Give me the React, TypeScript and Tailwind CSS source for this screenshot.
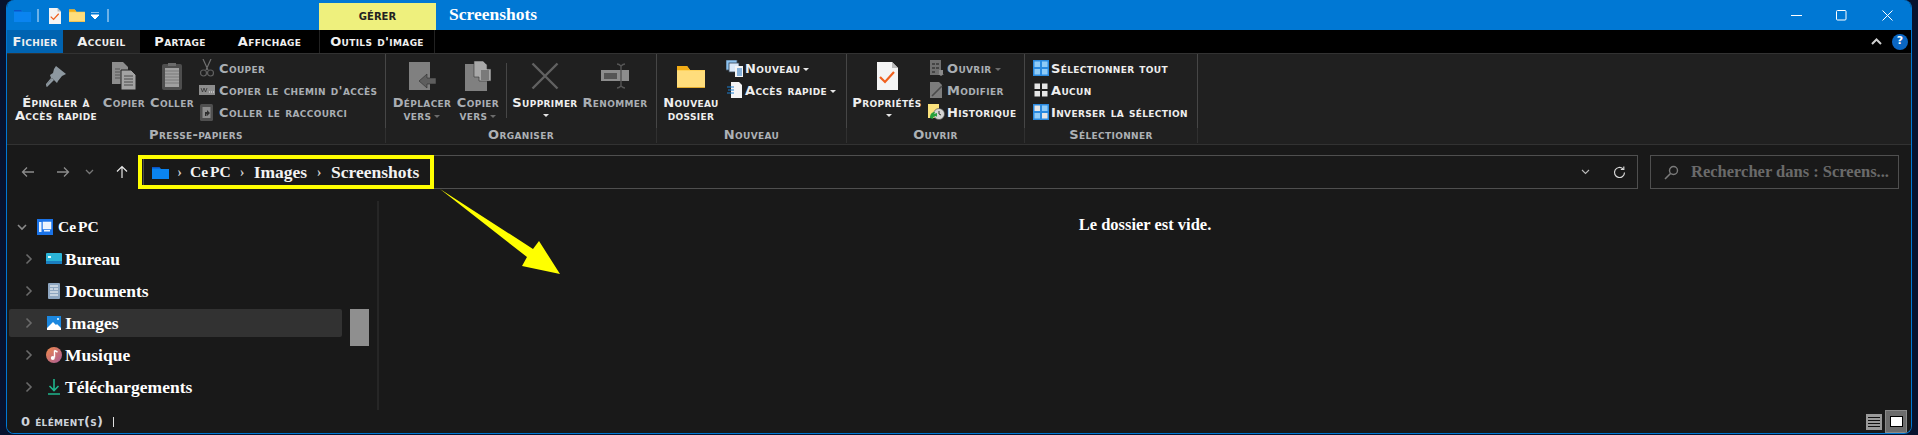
import type { ReactNode } from 'react'

const ribbonFont = "font-['DejaVu_Sans',sans-serif] font-bold [font-variant-caps:small-caps] text-[13px] leading-[13px] tracking-[0.35px] whitespace-nowrap"
const serifBold = "font-['Liberation_Serif',serif] font-bold whitespace-nowrap"

const Icon = ({ w, h, children }: { w: number; h: number; children: ReactNode }) => (
  <svg width={w} height={h} viewBox={`0 0 ${w} ${h}`} className="shrink-0">
    {children}
  </svg>
)

const FolderBlue = () => (
  <Icon w={17} h={13}>
    <path d="M0 1h7l2 2h8v10H0z" fill="#0a84f0" />
    <path d="M0 1h7l1.5 1.5H0z" fill="#0a55c8" />
  </Icon>
)

const FolderYellow = ({ w = 28, h = 23 }: { w?: number; h?: number }) => (
  <svg width={w} height={h} viewBox="0 0 28 23" className="shrink-0">
    <path d="M0 1h10l3 4h15v18H0z" fill="#ffd35c" />
    <path d="M0 1h10l3 4H0z" fill="#f2ac16" />
    <path d="M0 6h28v17H0z" fill="#ffdd7c" />
    <path d="M0 22h28v1H0z" fill="#e2a92c" />
  </svg>
)

const PropsPage = ({ w = 21, h = 28 }: { w?: number; h?: number }) => (
  <svg width={w} height={h} viewBox="0 0 21 28" className="shrink-0">
    <path d="M0 0h15l6 6v22H0z" fill="#f4f4f4" />
    <path d="M15 0l6 6h-6z" fill="#bbb" />
    <path d="M3 15l5 5 9-10" fill="none" stroke="#f0601e" strokeWidth="2.2" />
  </svg>
)

const PinIcon = () => (
  <Icon w={22} h={22}>
    <path d="M11 1l10 8-4 2-4 5-1 2-5-5L2 20l-1 1 0-2 5-6-1-3 3-2 1-4z" fill="#8d98a0" />
    <path d="M1 21l6-8 2 2-7 7z" fill="#8d98a0" />
  </Icon>
)

const CopyIcon = () => (
  <Icon w={24} h={28}>
    <path d="M0 0h11l5 5v17H0z" fill="#8c8c8c" />
    <path d="M9 8h10l5 5v15H9z" fill="#a3a3a3" stroke="#222" strokeWidth="1" />
    <path d="M12 14h9M12 17h9M12 20h9M12 23h9" stroke="#4a4a4a" strokeWidth="1" />
    <path d="M3 7h5M3 10h5M3 13h5M3 16h5" stroke="#555" strokeWidth="1" />
  </Icon>
)

const PasteIcon = () => (
  <Icon w={20} h={30}>
    <rect x="0" y="3" width="20" height="26" rx="2" fill="#4e4e4e" />
    <rect x="3" y="7" width="14" height="19" fill="#a0a0a0" />
    <path d="M3 10h14M3 13h14M3 16h14M3 19h14M3 22h14" stroke="#7b7b7b" strokeWidth="1" />
    <path d="M6 5h8V2H6z" fill="#6a6a6a" />
  </Icon>
)

const ScissorsIcon = () => (
  <Icon w={16} h={18}>
    <path d="M4 0l5 11M12 0L7 11" stroke="#6f6f6f" strokeWidth="1.2" fill="none" />
    <circle cx="4.5" cy="14" r="3" stroke="#5f5f5f" strokeWidth="1.2" fill="none" />
    <circle cx="11.5" cy="14" r="3" stroke="#5f5f5f" strokeWidth="1.2" fill="none" />
  </Icon>
)

const PathIcon = () => (
  <Icon w={16} h={10}>
    <rect width="16" height="10" fill="#8d8d8d" />
    <path d="M2 3l1.5 4L5 3l1.5 4L8 3" stroke="#333" strokeWidth="0.8" fill="none" />
    <path d="M10 7h1M12 7h1M14 7h1" stroke="#eee" strokeWidth="1" />
  </Icon>
)

const ShortcutIcon = () => (
  <Icon w={13} h={17}>
    <rect width="13" height="17" y="0" rx="1.5" fill="#4f4f4f" />
    <rect x="2.5" y="3" width="8" height="11" fill="#8c8c8c" />
    <path d="M5 12V8h2V6l3 3-3 3v-2H6.5v2z" fill="#2e2e2e" />
  </Icon>
)

const MoveIcon = () => (
  <Icon w={27} h={28}>
    <path d="M0 0h21v28H0z" fill="#808080" />
    <path d="M10 19l8-7v4h9v6h-9v4z" fill="#5e5e5e" stroke="#222" strokeWidth="0.5" />
  </Icon>
)

const CopyToIcon = () => (
  <Icon w={26} h={30}>
    <path d="M0 3h22v27H0z" fill="#808080" />
    <path d="M9 0h9l4 4v4h4v12H14v-4H9z" fill="#a8a8a8" stroke="#333" strokeWidth="0.6" />
    <path d="M16 10h8M16 12h8M16 14h8M16 16h8M16 18h8" stroke="#4c4c4c" strokeWidth="1" />
  </Icon>
)

const DeleteIcon = () => (
  <Icon w={28} h={28}>
    <path d="M1.5 1.5l25 25M26.5 1.5l-25 25" stroke="#616161" strokeWidth="2.4" />
  </Icon>
)

const RenameIcon = () => (
  <Icon w={28} h={26}>
    <rect x="0" y="7" width="28" height="11" fill="#8d8d8d" />
    <rect x="3" y="10" width="13" height="6" fill="#555" />
    <path d="M16 1c2 0 3 1 4 2 1-1 2-2 4-2M20 3v20M16 25c2 0 3-1 4-2 1 1 2 2 4 2" stroke="#555" strokeWidth="1.4" fill="none" />
  </Icon>
)

const NewItemIcon = () => (
  <Icon w={17} h={17}>
    <rect x="0" y="0" width="11" height="10" fill="#8cc2ef" stroke="#456" strokeWidth="0.8" />
    <rect x="3" y="3" width="10" height="9" fill="#dceafa" stroke="#345" strokeWidth="0.8" />
    <path d="M9 6h8v11H9z" fill="#f5f5f5" />
    <path d="M11 9h5M11 11h5M11 13h5M11 15h5" stroke="#1a6fc0" strokeWidth="1" />
  </Icon>
)

const QuickAccessIcon = () => (
  <Icon w={16} h={16}>
    <path d="M4 0h8l3 3v13H4z" fill="#f5f5f5" />
    <path d="M0 5h7M1 8h6M0 11h7" stroke="#1a7fd0" strokeWidth="1" />
  </Icon>
)

const OpenIcon = () => (
  <Icon w={14} h={16}>
    <rect width="11" height="15" fill="#6f6f6f" />
    <path d="M2 3h3v2H2zM6 3h3v2H6zM2 7h3v2H2zM6 7h3v2H6zM2 11h3v2H2z" fill="#444" />
    <path d="M9 10h4v4h1l-3 2-3-2h1z" fill="#8a8a8a" />
  </Icon>
)

const EditIcon = () => (
  <Icon w={14} h={16}>
    <path d="M0 0h9l3 3v13H0z" fill="#7c7c7c" />
    <path d="M2 14L12 4" stroke="#4a4a4a" strokeWidth="1.6" />
  </Icon>
)

const HistoryIcon = () => (
  <Icon w={17} h={16}>
    <rect width="11" height="14" fill="#fbe27d" />
    <circle cx="11" cy="10" r="5.5" fill="#d4d4d4" stroke="#444" strokeWidth="0.6" />
    <path d="M11 7v3l2 1" stroke="#333" strokeWidth="1" fill="none" />
    <path d="M2 14c0-4 2-6 5-6l-1 2 3-1v4l-1-1c-2 0-3 1-3 3z" fill="#26a03c" />
  </Icon>
)

const SelectGrid = ({ fills, frame }: { fills: string[]; frame?: boolean }) => (
  <Icon w={16} h={16}>
    {frame && <rect width="16" height="16" fill="#2a8ae0" />}
    <rect x="1.5" y="1.5" width="5.5" height="5.5" fill={fills[0]} />
    <rect x="9" y="1.5" width="5.5" height="5.5" fill={fills[1]} />
    <rect x="1.5" y="9" width="5.5" height="5.5" fill={fills[2]} />
    <rect x="9" y="9" width="5.5" height="5.5" fill={fills[3]} />
  </Icon>
)

const Caret = ({ dim }: { dim?: boolean }) => (
  <span className={`inline-block align-middle ml-[3px] border-x-[3px] border-t-[3px] border-x-transparent ${dim ? 'border-t-[#6b6b6b]' : 'border-t-[#e6e6e6]'}`} />
)

const LargeButton = ({
  icon,
  lines,
  width,
  dim,
  caret,
}: {
  icon: ReactNode
  lines: ReactNode[]
  width: string
  dim?: boolean
  caret?: boolean
}) => (
  <div className={`flex flex-col items-center ${width}`}>
    <div className="h-[38px] flex items-center justify-center">{icon}</div>
    <div className={`${ribbonFont} mt-[1px] text-center ${dim ? 'text-[#a9aeb3]' : 'text-[#eeeeee]'}`}>
      {lines.map((line, i) => (
        <div key={i}>{line}</div>
      ))}
      {caret && (
        <div className="leading-[12px]">
          <Caret />
        </div>
      )}
    </div>
  </div>
)

const SmallButton = ({ icon, label, dim, wide }: { icon: ReactNode; label: ReactNode; dim?: boolean; wide?: boolean }) => (
  <div className="flex items-center h-[22px]">
    <div className={`w-[19px] flex justify-center shrink-0 -ml-[1px] ${wide ? 'mr-[3px]' : 'mr-[1px]'}`}>{icon}</div>
    <span className={`${ribbonFont} ${dim ? 'text-[#a9aeb3]' : 'text-[#eeeeee]'}`}>{label}</span>
  </div>
)

const Group = ({ label, width, children }: { label: string; width: string; children: ReactNode }) => (
  <div className={`${width} shrink-0 flex flex-col`}>
    <div className="h-[74px] flex pt-[3px] border-r border-[#464646]">{children}</div>
    <div className={`${ribbonFont} h-[15px] text-center text-[#adb1b5] border-r border-[#303030]`}>{label}</div>
  </div>
)

const NavItem = ({ icon, label, active }: { icon: ReactNode; label: string; active?: boolean }) => (
  <div className="h-[32px] flex items-center">
    <div className={`flex items-center w-full h-[28px] rounded-[2px] pl-[18px] ${active ? 'bg-[#323232]' : ''}`}>
      <svg width="8" height="12" viewBox="0 0 8 12" className="shrink-0 ml-[-2px]">
        <path d="M1.5 1.5L6 6l-4.5 4.5" fill="none" stroke="#6a6a6a" strokeWidth="1.6" />
      </svg>
      <div className="w-[17px] ml-[12px] flex justify-center shrink-0">{icon}</div>
      <span className={`${serifBold} ml-[3px] text-[17.5px] text-white`}>{label}</span>
    </div>
  </div>
)

const Tab = ({ label, width, className = '' }: { label: string; width: string; className?: string }) => (
  <div className={`${ribbonFont} ${width} h-[23px] flex items-center justify-center text-[#f0f0f0] ${className}`}>{label}</div>
)

export default function App() {
  return (
    <div className="relative w-[1918px] h-[435px] bg-[#07122e] overflow-hidden">
      <div className="mx-[6px] h-[434px] flex flex-col rounded-t-[8px] rounded-b-[8px] overflow-hidden border-x border-b border-[#0078d4] bg-[#191919]">
        {/* title bar */}
        <div className="h-[30px] shrink-0 bg-[#0078d4] flex">
          <div className="w-[312px] flex items-center pl-[7px] pt-[1px] gap-0">
            <FolderBlue />
            <div className="ml-[6px] w-[2px] h-[13px] bg-[#6db2e8]" />
            <div className="ml-[10px]">
              <PropsPage w={12} h={16} />
            </div>
            <div className="ml-[8px]">
              <FolderYellow w={16} h={13} />
            </div>
            <svg width="8" height="8" viewBox="0 0 8 8" className="ml-[6px]">
              <path d="M0 0h8M0 3h8L4 7z" stroke="#fff" fill="#fff" strokeWidth="1" />
            </svg>
            <div className="ml-[8px] w-[2px] h-[13px] bg-[#6db2e8]" />
          </div>
          <div className="w-[117px] mt-[3px] bg-[#eef07d] flex items-center justify-center font-['DejaVu_Sans',sans-serif] font-bold text-[10px] text-[#222222]">
            GÉRER
          </div>
          <div className={`${serifBold} ml-[13px] text-[17.5px] text-white leading-[28px]`}>Screenshots</div>
          <div className="ml-auto flex items-center pt-[0px]">
            <svg width="11" height="11" viewBox="0 0 11 11" className="mr-[34px]">
              <path d="M0 5.5h11" stroke="#fff" strokeWidth="1" />
            </svg>
            <svg width="11" height="11" viewBox="0 0 11 11" className="mr-[35px]">
              <rect x="0.5" y="0.5" width="9.5" height="9.5" rx="1" fill="none" stroke="#fff" strokeWidth="1" />
            </svg>
            <svg width="11" height="11" viewBox="0 0 11 11" className="mr-[18px]">
              <path d="M0.5 0.5l10 10M10.5 0.5l-10 10" stroke="#fff" strokeWidth="1" />
            </svg>
          </div>
        </div>

        {/* tabs */}
        <div className="h-[23px] shrink-0 bg-black flex items-start">
          <Tab label="Fichier" width="w-[56px]" className="bg-[#0063b1]" />
          <Tab label="Accueil" width="w-[77px]" className="bg-[#202020]" />
          <Tab label="Partage" width="w-[80px]" />
          <Tab label="Affichage" width="w-[99px]" />
          <Tab label="Outils d'image" width="w-[116px]" className="border-x border-[#222]" />
          <div className="ml-auto h-[23px] flex items-center">
            <svg width="11" height="7" viewBox="0 0 11 7" className="mr-[10px]">
              <path d="M1 6l4.5-4.5L10 6" fill="none" stroke="#d0d0d0" strokeWidth="2" />
            </svg>
            <div className="w-[16px] h-[16px] mr-[3px] rounded-full bg-[#0a66c2] flex items-center justify-center font-['DejaVu_Sans',sans-serif] font-bold text-[11px] text-white">
              ?
            </div>
          </div>
        </div>

        {/* ribbon */}
        <div className="h-[92px] shrink-0 bg-[#202020] border-t border-b border-[#323232] flex">
          <Group label="Presse-papiers" width="w-[379px]">
            <LargeButton icon={<PinIcon />} lines={['Épingler à', 'Accès rapide']} width="w-[98px]" />
            <LargeButton icon={<CopyIcon />} lines={['Copier']} width="w-[44px] ml-[-3px]" dim />
            <LargeButton icon={<PasteIcon />} lines={['Coller']} width="w-[48px] ml-[2px]" dim />
            <div className="ml-[2px]">
              <SmallButton wide icon={<ScissorsIcon />} label="Couper" dim />
              <SmallButton wide icon={<PathIcon />} label="Copier le chemin d'accès" dim />
              <SmallButton wide icon={<ShortcutIcon />} label="Coller le raccourci" dim />
            </div>
          </Group>
          <Group label="Organiser" width="w-[271px]">
            <LargeButton icon={<MoveIcon />} lines={['Déplacer', <>vers<Caret dim /></>]} width="w-[62px] ml-[5px]" dim />
            <LargeButton icon={<CopyToIcon />} lines={['Copier', <>vers<Caret dim /></>]} width="w-[50px]" dim />
            <div className="ml-[3px] w-px h-[55px] mt-[6px] bg-[#464646]" />
            <LargeButton icon={<DeleteIcon />} lines={['Supprimer']} width="w-[72px] ml-[2px]" caret />
            <LargeButton icon={<RenameIcon />} lines={['Renommer']} width="w-[68px]" dim />
          </Group>
          <Group label="Nouveau" width="w-[190px]">
            <LargeButton icon={<FolderYellow />} lines={['Nouveau', 'dossier']} width="w-[64px] ml-[2px]" />
            <div className="ml-[3px]">
              <SmallButton icon={<NewItemIcon />} label={<>Nouveau<Caret /></>} />
              <SmallButton icon={<QuickAccessIcon />} label={<>Accès rapide<Caret /></>} />
            </div>
          </Group>
          <Group label="Ouvrir" width="w-[178px]">
            <LargeButton icon={<PropsPage />} lines={['Propriétés']} width="w-[76px] ml-[2px]" caret />
            <div className="ml-[3px]">
              <SmallButton icon={<OpenIcon />} label={<>Ouvrir<Caret dim /></>} dim />
              <SmallButton icon={<EditIcon />} label="Modifier" dim />
              <SmallButton icon={<HistoryIcon />} label="Historique" />
            </div>
          </Group>
          <Group label="Sélectionner" width="w-[173px]">
            <div className="ml-[7px]">
              <SmallButton icon={<SelectGrid frame fills={['#8fcbf7', '#8fcbf7', '#8fcbf7', '#8fcbf7']} />} label="Sélectionner tout" />
              <SmallButton icon={<SelectGrid fills={['#e6e6e6', '#e6e6e6', '#e6e6e6', '#e6e6e6']} />} label="Aucun" />
              <SmallButton icon={<SelectGrid frame fills={['#e6e6e6', '#8fcbf7', '#8fcbf7', '#e6e6e6']} />} label="Inverser la sélection" />
            </div>
          </Group>
        </div>

        {/* address bar */}
        <div className="h-[56px] shrink-0 bg-[#191919] flex items-start pt-[10px]">
          <div className="w-[131px] h-[34px] flex items-center">
            <svg width="14" height="12" viewBox="0 0 14 12" className="ml-[14px]">
              <path d="M13 6H1.5M6 1.5L1.5 6 6 10.5" fill="none" stroke="#8c8c8c" strokeWidth="1.3" />
            </svg>
            <svg width="14" height="12" viewBox="0 0 14 12" className="ml-[21px]">
              <path d="M1 6h11.5M8 1.5L12.5 6 8 10.5" fill="none" stroke="#8c8c8c" strokeWidth="1.3" />
            </svg>
            <svg width="9" height="6" viewBox="0 0 9 6" className="ml-[15px]">
              <path d="M1 1l3.5 3.5L8 1" fill="none" stroke="#777" strokeWidth="1.3" />
            </svg>
            <svg width="12" height="14" viewBox="0 0 12 14" className="ml-[22px]">
              <path d="M6 13V1.5M1 6.5l5-5 5 5" fill="none" stroke="#e8e8e8" strokeWidth="1.2" />
            </svg>
          </div>
          <div className="w-[296px] h-[34px] shrink-0 border-[4px] border-[#ffff00] flex items-center bg-[#191919]">
            <div className="h-full border-l border-[#4a4a4a] ml-[1px] flex items-center pl-[8px]">
              <FolderBlue />
              <span className={`${serifBold} text-[17.5px] text-[#f2f2f2] flex items-center`}>
                <span className="w-[21px] text-center text-[14px] text-[#cccccc]">›</span>
                <span className="text-[15.5px] [word-spacing:-2px]">Ce PC</span>
                <span className="w-[23px] text-center text-[14px] text-[#cccccc]">›</span>
                <span>Images</span>
                <span className="w-[24px] text-center text-[14px] text-[#cccccc]">›</span>
                <span>Screenshots</span>
              </span>
            </div>
          </div>
          <div className="w-[1204px] h-[34px] shrink-0 border-y border-r border-[#4f4f4f] flex items-center justify-end">
            <svg width="9" height="6" viewBox="0 0 9 6" className="mr-[23px]">
              <path d="M1 1l3.5 3.5L8 1" fill="none" stroke="#bbbbbb" strokeWidth="1.1" />
            </svg>
            <svg width="13" height="13" viewBox="0 0 13 13" className="mr-[11px]">
              <path d="M11.5 6.5a5 5 0 1 1-1.6-3.7" fill="none" stroke="#d8d8d8" strokeWidth="1.2" />
              <path d="M10.8 0.5v3h-3" fill="none" stroke="#d8d8d8" strokeWidth="1.2" />
            </svg>
          </div>
          <div className="ml-[12px] w-[249px] h-[34px] shrink-0 border border-[#4f4f4f] flex items-center pl-[13px]">
            <svg width="15" height="15" viewBox="0 0 15 15" className="shrink-0">
              <circle cx="9.5" cy="5.5" r="4" fill="none" stroke="#7a7a7a" strokeWidth="1.4" />
              <path d="M6.5 8.5L1 14" stroke="#7a7a7a" strokeWidth="1.6" />
            </svg>
            <span className={`${serifBold} ml-[12px] text-[16.5px] text-[#6a6a6a]`}>Rechercher dans : Screens...</span>
          </div>
        </div>

        {/* body */}
        <div className="flex-1 flex min-h-0">
          <div className="w-[372px] shrink-0 flex relative border-r-2 border-[#262626]">
            <div className="w-[333px] shrink-0 ml-[2px] pt-[10px]">
              <div className="h-[32px] flex items-center pl-[8px]">
                <svg width="10" height="7" viewBox="0 0 10 7" className="shrink-0">
                  <path d="M1 1l4 4 4-4" fill="none" stroke="#8a8a8a" strokeWidth="1.6" />
                </svg>
                <svg width="16" height="16" viewBox="0 0 16 16" className="ml-[10px] shrink-0">
                  <rect width="16" height="16" fill="#1a73e8" />
                  <rect x="6" y="3" width="8" height="7" fill="#eaf3fe" stroke="#fff" strokeWidth="0.5" />
                  <rect x="2" y="3" width="2.5" height="10" fill="#eaf3fe" />
                  <rect x="7" y="11" width="6" height="1.5" fill="#eaf3fe" />
                </svg>
                <span className={`${serifBold} ml-[5px] text-[15.5px] [word-spacing:-2px] text-white`}>Ce PC</span>
              </div>
              <NavItem
                label="Bureau"
                icon={
                  <Icon w={16} h={12}>
                    <rect width="16" height="11" rx="1" fill="#2bb5d8" />
                    <rect y="8" width="16" height="3" fill="#1a7fc0" />
                    <rect x="2" y="3" width="3" height="2" fill="#dff" />
                  </Icon>
                }
              />
              <NavItem
                label="Documents"
                icon={
                  <Icon w={12} h={16}>
                    <rect width="12" height="16" rx="1" fill="#8ea6c0" />
                    <path d="M2 3h8M6 6h4M2 9h8M2 12h8M2 6h3" stroke="#fff" strokeWidth="1" />
                  </Icon>
                }
              />
              <NavItem
                label="Images"
                active
                icon={
                  <Icon w={14} h={14}>
                    <rect width="14" height="14" fill="#1b87df" />
                    <path d="M0 12l6-6 3 3 1-1 4 4v2H0z" fill="#fff" />
                    <circle cx="11" cy="3" r="1" fill="#fff" />
                  </Icon>
                }
              />
              <NavItem
                label="Musique"
                icon={
                  <Icon w={16} h={16}>
                    <defs>
                      <linearGradient id="music" x1="0" y1="0" x2="1" y2="1">
                        <stop offset="0" stopColor="#f08a4a" />
                        <stop offset="1" stopColor="#a85a98" />
                      </linearGradient>
                    </defs>
                    <circle cx="8" cy="8" r="8" fill="url(#music)" />
                    <path d="M8.5 3.5v7" stroke="#fff" strokeWidth="1.4" />
                    <path d="M8.5 3.5l3 1.5" stroke="#fff" strokeWidth="1.4" />
                    <circle cx="6.8" cy="11" r="2" fill="#fff" />
                  </Icon>
                }
              />
              <NavItem
                label="Téléchargements"
                icon={
                  <Icon w={12} h={16}>
                    <path d="M6 0v11M1.5 7L6 11.5 10.5 7" fill="none" stroke="#1fb58c" strokeWidth="1.6" />
                    <path d="M0 15h12" stroke="#1fb58c" strokeWidth="1.6" />
                  </Icon>
                }
              />
            </div>
            <div className="ml-[8px] mt-[108px] w-[19px] h-[37px] bg-[#8f8f8f]" />
          </div>
          <div className={`${serifBold} flex-1 text-center text-[16.5px] text-white pt-[12px]`}>Le dossier est vide.</div>
        </div>

        {/* status bar */}
        <div className="h-[23px] shrink-0 flex items-center bg-[#191919]">
          <span className="ml-[14px] font-['DejaVu_Sans',sans-serif] [font-variant-caps:small-caps] font-bold text-[13px] tracking-[0.3px] text-[#cdd3da]">0 élément(s)</span>
          <div className="ml-[10px] w-px h-[10px] bg-[#e0e0e0]" />
          <div className="ml-auto flex items-center mr-[4px]">
            <div className="w-[16px] h-[16px] bg-[#9a9a9a] flex flex-col justify-center gap-[2px] px-[2px]">
              <div className="h-px bg-[#111]" />
              <div className="h-px bg-[#111]" />
              <div className="h-px bg-[#111]" />
              <div className="h-px bg-[#111]" />
            </div>
            <div className="ml-[3px] w-[22px] h-[23px] bg-[#6c6c6c] border border-[#8a8a8a] flex items-center justify-center">
              <div className="w-[13px] h-[11px] bg-white border border-black" />
            </div>
          </div>
        </div>
      </div>

      {/* annotation arrow */}
      <svg width="1918" height="435" viewBox="0 0 1918 435" className="absolute inset-0 pointer-events-none">
        <polygon points="440,189 533,249 539,241 560,274 522,266 527,257" fill="#ffff00" />
      </svg>
    </div>
  )
}
